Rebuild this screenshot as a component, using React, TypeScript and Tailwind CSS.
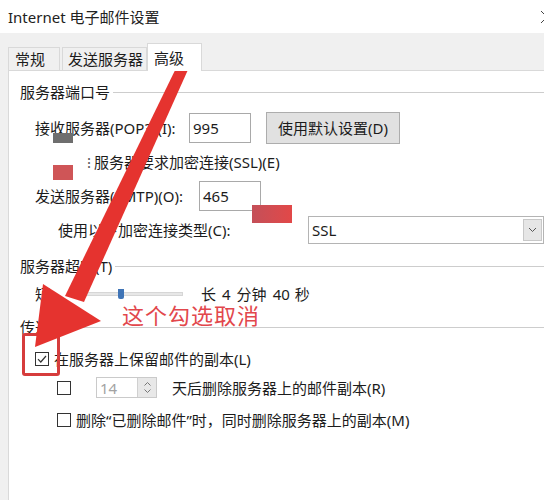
import React from 'react';

function Checkbox({ checked = false }: { checked?: boolean }) {
  return (
    <div className="w-[14px] h-[14px] shrink-0 border border-[#333] bg-white flex items-center justify-center">
      {checked && (
        <svg width="10" height="10" viewBox="0 0 10 10">
          <path d="M1 5.2 L3.8 8 L9 2" fill="none" stroke="#333" strokeWidth="1.2" />
        </svg>
      )}
    </div>
  );
}

function GroupHeader({ label, className = '' }: { label: string; className?: string }) {
  return (
    <div className={`h-5 flex items-center leading-5 ${className}`}>
      <span>{label}</span>
      <div className="flex-1 h-px bg-[#cdcdcd] ml-[3px]" />
    </div>
  );
}

export default function App() {
  return (
    <div className="relative w-[544px] h-[500px] overflow-hidden bg-[#f0f0f0] text-[15px] text-[#1c1c1c] font-['Noto_Sans','Noto_Sans_CJK_SC',sans-serif]">
      {/* title bar */}
      <div className="h-[33px] bg-white flex items-center justify-between pl-2">
        <span className="leading-5 text-[#222]">Internet 电子邮件设置</span>
        <svg width="14" height="14" viewBox="0 0 14 14" className="-mr-[10px]">
          <path d="M1 1 L13 13 M13 1 L1 13" stroke="#444" strokeWidth="1" />
        </svg>
      </div>

      {/* tabs */}
      <div className="h-[37px] flex items-end pl-2">
        <div className="w-[52px] h-[23px] border border-b-0 border-[#d9d9d9] pl-[6px] flex items-center leading-5">常规</div>
        <div className="w-[85px] h-[23px] ml-[2px] border border-b-0 border-[#d9d9d9] pl-[5px] flex items-center leading-5">发送服务器</div>
        <div className="relative z-10 w-[55px] h-[28px] -mb-px border border-b-0 border-[#d9d9d9] bg-white pl-[6px] flex items-center leading-5">高级</div>
      </div>

      {/* panel */}
      <div className="ml-2 h-[430px] bg-white border-l border-t border-[#d9d9d9] pl-[11px]">
        <GroupHeader label="服务器端口号" className="mt-[11px]" />

        <div className="mt-[10px] h-[32px] flex items-center pl-[15px]">
          <span className="w-[154px] leading-5">接收服务器(POP3)(I):</span>
          <div className="w-[62px] h-[30px] border border-[#a9a9a9] bg-white px-[3px] flex items-center leading-5">995</div>
          <div className="ml-[15px] w-[134px] h-[32px] border border-[#adadad] bg-[#e1e1e1] flex items-center justify-center leading-5">使用默认设置(D)</div>
        </div>

        <div className="mt-[8px] h-5 flex items-center leading-5 pl-[67px]">
          <span className="w-[7px] text-[#555]">⁝</span>
          <span>服务器要求加密连接(SSL)(E)</span>
        </div>

        <div className="mt-[9px] h-[30px] flex items-center pl-[15px]">
          <span className="w-[164px] leading-5">发送服务器(SMTP)(O):</span>
          <div className="w-[62px] h-[30px] border border-[#a9a9a9] bg-white px-[3px] flex items-center leading-5">465</div>
        </div>

        <div className="mt-[5px] h-[28px] flex items-center pl-[38px]">
          <span className="w-[250px] leading-5">使用以下加密连接类型(C):</span>
          <div className="w-[236px] h-[28px] border border-[#b4b4b4] bg-white flex items-center justify-between pl-[3px] pr-[1px]">
            <span className="leading-5">SSL</span>
            <div className="w-[19px] h-[22px] border border-[#c8c8c8] bg-[#e6e6e6] flex items-center justify-center">
              <svg width="9" height="6" viewBox="0 0 9 6">
                <path d="M1 1 L4.5 4.5 L8 1" fill="none" stroke="#555" strokeWidth="1" />
              </svg>
            </div>
          </div>
        </div>

        <GroupHeader label="服务器超时(T)" className="mt-[12px]" />

        <div className="mt-[8px] h-5 flex items-center leading-[16px] pl-[15px]">
          <span className="w-[15px]">短</span>
          <div className="relative ml-[33px] w-[100px] h-[4px] border border-[#d6d6d6] bg-[#e7e7e7]">
            <div className="absolute left-[34px] -top-[4px] w-[6px] h-[10px] rounded-b-[2px] bg-[#3f74b6]" />
          </div>
          <span className="ml-[18px]">长</span>
          <span className="ml-[6px]">4</span>
          <span className="ml-[6px]">分钟</span>
          <span className="ml-[6px]">40</span>
          <span className="ml-[5px]">秒</span>
        </div>

        <GroupHeader label="传递" className="mt-[13px]" />

        <div className="mt-[12px] h-5 flex items-center leading-5 pl-[15px]">
          <Checkbox checked />
          <span className="ml-[5px]">在服务器上保留邮件的副本(L)</span>
        </div>

        <div className="mt-[8px] h-[21px] flex items-center leading-5 pl-[37px]">
          <Checkbox />
          <div className="ml-[25px] w-[61px] h-[21px] border border-[#cacaca] bg-white flex items-center justify-between pl-[3px]">
            <span className="text-[#a3a3a3]">14</span>
            <div className="w-[19px] h-full bg-[#e8e8e8] border-l border-[#d0d0d0] flex flex-col items-center justify-center gap-[3px]">
              <svg width="7" height="4" viewBox="0 0 7 4"><path d="M0.5 3.5 L3.5 0.5 L6.5 3.5" fill="none" stroke="#777" strokeWidth="1" /></svg>
              <svg width="7" height="4" viewBox="0 0 7 4"><path d="M0.5 0.5 L3.5 3.5 L6.5 0.5" fill="none" stroke="#777" strokeWidth="1" /></svg>
            </div>
          </div>
          <span className="ml-[15px]">天后删除服务器上的邮件副本(R)</span>
        </div>

        <div className="mt-[12px] h-5 flex items-center leading-5 pl-[37px]">
          <Checkbox />
          <span className="ml-[5px]">删除“已删除邮件”时，同时删除服务器上的副本(M)</span>
        </div>
      </div>

      {/* annotation overlays */}
      <div className="absolute left-[53px] top-[133px] w-[20px] h-[10px] bg-[#6e6e6e]" />
      <div className="absolute left-[53px] top-[165px] w-[20px] h-[15px] bg-[#cf5557]" />
      <div className="absolute left-[252px] top-[205px] w-[40px] h-[18px] bg-gradient-to-r from-[#c44f58] to-[#e24848]" />
      <div className="absolute left-[22px] top-[333px] w-[38px] h-[43px] border-[3px] border-[#d63c3c] rounded-[3px]" />
      <svg className="absolute inset-0 pointer-events-none" width="544" height="500" viewBox="0 0 544 500">
        <polygon points="181,58 191,63 84,302 65,296" fill="#e5332f" />
        <polygon points="43,284 101,321 35,347" fill="#e5332f" />
      </svg>
      <div className="absolute left-[122px] top-[304px] text-[22px] leading-none tracking-[1px] text-[#e2474c]">这个勾选取消</div>
    </div>
  );
}
